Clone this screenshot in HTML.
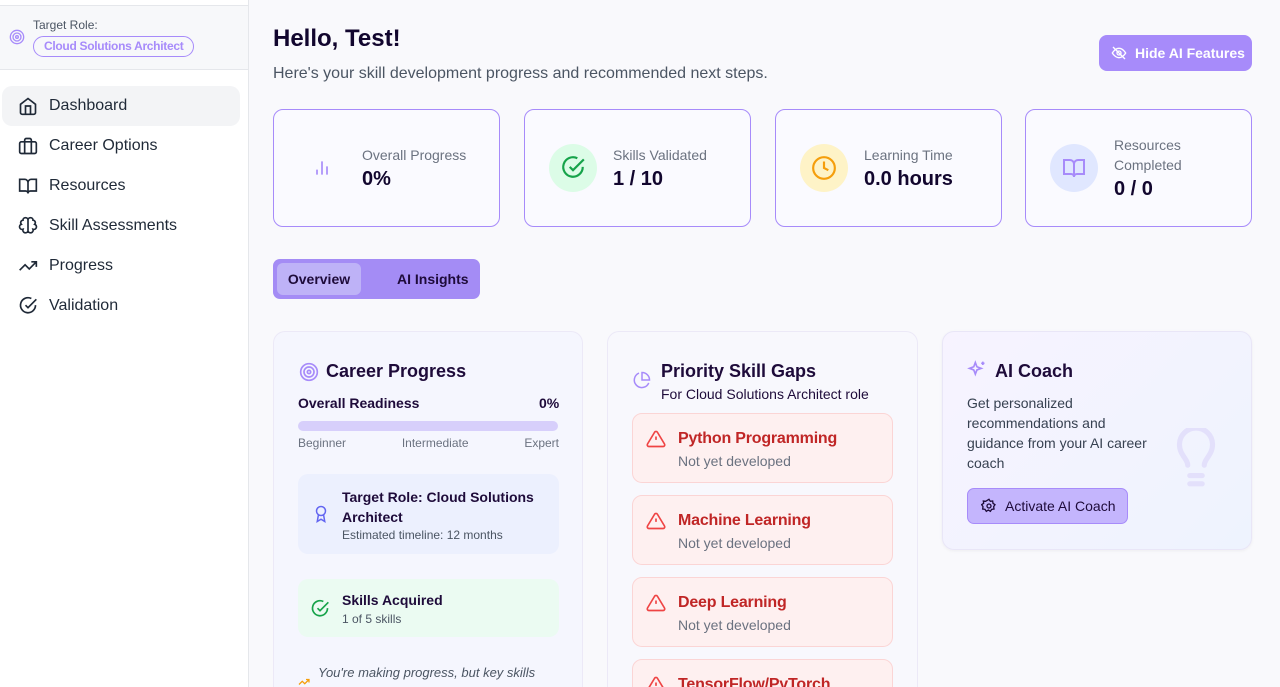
<!DOCTYPE html>
<html style="overflow:hidden;height:687px"><head><meta charset="utf-8"><style>
*{box-sizing:border-box;margin:0;padding:0}
body{width:1280px;height:687px;overflow:hidden;background:#f9f9fc;font-family:"Liberation Sans",sans-serif;color:#1e0b3a;position:relative}
.abs{position:absolute}
.side{left:0;top:0;width:249px;height:687px;background:#fff;border-right:1px solid #e5e7eb}
.sh{left:0;top:5px;width:248px;height:65px;background:#f7f8fa;border-top:1px solid #e5e7eb;border-bottom:1px solid #e5e7eb}
.nav{left:2px;width:238px;height:40px;border-radius:10px;display:flex;align-items:center;padding-left:16px;font-size:16px;color:#1f2937}
.nav svg{margin-right:11px}
.card{background:#fafaff;border:1px solid #a78bfa;border-radius:10px;height:118px;width:227px;top:109px;display:flex;align-items:center}
.ic{width:48px;height:48px;border-radius:50%;margin-left:24px;margin-right:16px;display:flex;align-items:center;justify-content:center;flex:none}
.lbl{font-size:14px;color:#6b7280;line-height:20px}
.val{font-size:20px;font-weight:bold;color:#12062e;margin-top:3px}
.big{top:331px;height:356px;border:1px solid #ece9f7;border-bottom:none;border-radius:12px 12px 0 0;background:#f5f6fe;overflow:hidden}
.gap{left:24px;width:261px;height:70px;background:#fef0f0;border:1px solid #fbd5d5;border-radius:10px}
.gap b{position:absolute;left:45px;top:16px;font-size:16px;color:#c02626;font-weight:bold;letter-spacing:-0.2px}
.gap span{position:absolute;left:45px;top:39px;font-size:14px;color:#6b7280}
.gap svg{position:absolute;left:13px;top:15px}
</style></head><body>
<div class="abs side"></div>
<div class="abs sh">
 <svg class="abs" style="left:9px;top:23px" width="16" height="16" viewBox="0 0 24 24" fill="none" stroke="#a78bfa" stroke-width="2"><circle cx="12" cy="12" r="10"/><circle cx="12" cy="12" r="6"/><circle cx="12" cy="12" r="2"/></svg>
 <div class="abs" style="left:33px;top:12px;font-size:12px;color:#4b5563">Target Role:</div>
 <div class="abs" style="left:33px;top:30px;height:21px;padding:0 10px;border:1px solid #a78bfa;border-radius:11px;font-size:12px;font-weight:bold;color:#a78bfa;line-height:19px;letter-spacing:-0.3px">Cloud Solutions Architect</div>
</div>
<div class="abs nav" style="top:86px;background:#f3f4f6"><svg width="20" height="20" viewBox="0 0 24 24" fill="none" stroke="#1f2937" stroke-width="2"><path d="M3 10l9-7 9 7v10a2 2 0 0 1-2 2H5a2 2 0 0 1-2-2z"/><path d="M9 22V12h6v10"/></svg>Dashboard</div>
<div class="abs nav" style="top:126px"><svg width="20" height="20" viewBox="0 0 24 24" fill="none" stroke="#1f2937" stroke-width="2"><rect x="2" y="7" width="20" height="14" rx="2"/><path d="M16 21V5a2 2 0 0 0-2-2h-4a2 2 0 0 0-2 2v16"/></svg>Career Options</div>
<div class="abs nav" style="top:166px"><svg width="20" height="20" viewBox="0 0 24 24" fill="none" stroke="#1f2937" stroke-width="2"><path d="M2 4h6a4 4 0 0 1 4 4v13a3 3 0 0 0-3-3H2zM22 4h-6a4 4 0 0 0-4 4v13a3 3 0 0 1 3-3h7z"/></svg>Resources</div>
<div class="abs nav" style="top:206px"><svg width="20" height="20" viewBox="0 0 24 24" fill="none" stroke="#1f2937" stroke-width="2"><path d="M12 5a3 3 0 0 0-6 0 3 3 0 0 0-2 5 3 3 0 0 0 2 6 3 3 0 0 0 6 2 3 3 0 0 0 6-2 3 3 0 0 0 2-6 3 3 0 0 0-2-5 3 3 0 0 0-6 0v13"/></svg>Skill Assessments</div>
<div class="abs nav" style="top:246px"><svg width="20" height="20" viewBox="0 0 24 24" fill="none" stroke="#1f2937" stroke-width="2"><path d="M22 7l-8.5 8.5-5-5L2 17M16 7h6v6"/></svg>Progress</div>
<div class="abs nav" style="top:286px"><svg width="20" height="20" viewBox="0 0 24 24" fill="none" stroke="#1f2937" stroke-width="2"><path d="M21 11a9 9 0 1 1-5-8"/><path d="M9 11l3 3L22 4"/></svg>Validation</div>

<div class="abs" style="left:273px;top:25px;font-size:24px;font-weight:bold;color:#12062e">Hello, Test!</div>
<div class="abs" style="left:273px;top:65px;font-size:16px;color:#4b5563">Here's your skill development progress and recommended next steps.</div>
<div class="abs" style="left:1099px;top:35px;width:153px;height:36px;background:#a78bfa;border-radius:8px;color:#fff;font-size:14px;font-weight:bold;display:flex;align-items:center;padding-left:12px"><svg width="16" height="16" viewBox="0 0 24 24" fill="none" stroke="#fff" stroke-width="2" style="margin-right:8px"><path d="M2 12s4-7 10-7 10 7 10 7-4 7-10 7S2 12 2 12z"/><circle cx="12" cy="12" r="3"/><path d="M3 3l18 18"/></svg>Hide AI Features</div>

<div class="abs card" style="left:273px"><div class="ic"><svg width="20" height="20" viewBox="0 0 24 24" fill="none" stroke="#a78bfa" stroke-width="2"><path d="M6 20v-6M12 20V4M18 20v-10"/></svg></div><div><div class="lbl">Overall Progress</div><div class="val">0%</div></div></div>
<div class="abs card" style="left:524px"><div class="ic" style="background:#dcfce7"><svg width="26" height="26" viewBox="0 0 24 24" fill="none" stroke="#16a34a" stroke-width="2"><path d="M21 11a9 9 0 1 1-5-8"/><path d="M9 11l3 3L22 4"/></svg></div><div><div class="lbl">Skills Validated</div><div class="val">1 / 10</div></div></div>
<div class="abs card" style="left:775px"><div class="ic" style="background:#fef3c7"><svg width="26" height="26" viewBox="0 0 24 24" fill="none" stroke="#f59e0b" stroke-width="2"><circle cx="12" cy="12" r="10"/><path d="M12 6v6l4 2"/></svg></div><div><div class="lbl">Learning Time</div><div class="val">0.0 hours</div></div></div>
<div class="abs card" style="left:1025px"><div class="ic" style="background:#e0e7ff"><svg width="24" height="24" viewBox="0 0 24 24" fill="none" stroke="#a78bfa" stroke-width="2"><path d="M2 4h6a4 4 0 0 1 4 4v13a3 3 0 0 0-3-3H2zM22 4h-6a4 4 0 0 0-4 4v13a3 3 0 0 1 3-3h7z"/></svg></div><div><div class="lbl">Resources<br>Completed</div><div class="val">0 / 0</div></div></div>

<div class="abs" style="left:273px;top:259px;width:207px;height:40px;background:#a48cf5;border-radius:7px"></div>
<div class="abs" style="left:277px;top:263px;width:84px;height:32px;background:#beb2f7;border-radius:6px;font-size:14px;font-weight:bold;color:#1e0b3a;text-align:center;line-height:32px">Overview</div>
<div class="abs" style="left:397px;top:271px;font-size:14px;font-weight:bold;color:#1e0b3a">AI Insights</div>

<div class="abs big" style="left:273px;width:310px">
 <svg class="abs" style="left:25px;top:30px" width="20" height="20" viewBox="0 0 24 24" fill="none" stroke="#a78bfa" stroke-width="2"><circle cx="12" cy="12" r="10"/><circle cx="12" cy="12" r="6"/><circle cx="12" cy="12" r="2"/></svg>
 <div class="abs" style="left:52px;top:29px;font-size:18px;font-weight:bold">Career Progress</div>
 <div class="abs" style="left:24px;top:63px;font-size:14px;font-weight:bold">Overall Readiness</div>
 <div class="abs" style="left:265px;top:63px;font-size:14px;font-weight:bold">0%</div>
 <div class="abs" style="left:24px;top:89px;width:260px;height:10px;border-radius:5px;background:#d7cffb"></div>
 <div class="abs" style="left:24px;top:104px;width:261px;font-size:12px;color:#6b7280;display:flex;justify-content:space-between"><span>Beginner</span><span>Intermediate</span><span>Expert</span></div>
 <div class="abs" style="left:24px;top:142px;width:261px;height:80px;background:#ecf0fe;border-radius:10px">
  <svg class="abs" style="left:14px;top:29px" width="18" height="22" viewBox="0 0 24 24" fill="none" stroke="#6366f1" stroke-width="2"><circle cx="12" cy="8" r="6"/><path d="M15.5 13.5L17 22l-5-3-5 3 1.5-8.5"/></svg>
  <div class="abs" style="left:44px;top:13px;font-size:14px;font-weight:bold;line-height:20px">Target Role: Cloud Solutions<br>Architect</div>
  <div class="abs" style="left:44px;top:54px;font-size:12px;color:#4b5563">Estimated timeline: 12 months</div>
 </div>
 <div class="abs" style="left:24px;top:247px;width:261px;height:58px;background:#ebfbf2;border-radius:10px">
  <svg class="abs" style="left:12px;top:20px" width="20" height="20" viewBox="0 0 24 24" fill="none" stroke="#16a34a" stroke-width="2"><path d="M21 11a9 9 0 1 1-5-8"/><path d="M9 11l3 3L22 4"/></svg>
  <div class="abs" style="left:44px;top:13px;font-size:14px;font-weight:bold">Skills Acquired</div>
  <div class="abs" style="left:44px;top:33px;font-size:12px;color:#4b5563">1 of 5 skills</div>
 </div>
 <svg class="abs" style="left:24px;top:344px" width="12" height="12" viewBox="0 0 24 24" fill="none" stroke="#f59e0b" stroke-width="2.5"><path d="M22 7l-8.5 8.5-5-5L2 17M16 7h6v6"/></svg>
 <div class="abs" style="left:44px;top:333px;font-size:13px;font-style:italic;color:#4b5563;white-space:nowrap">You're making progress, but key skills</div>
</div>

<div class="abs big" style="left:607px;width:311px;background:#f8f8fd">
 <svg class="abs" style="left:25px;top:39px" width="18" height="18" viewBox="0 0 24 24" fill="none" stroke="#a78bfa" stroke-width="2"><path d="M21 15.9A10 10 0 1 1 8 2.8"/><path d="M22 12A10 10 0 0 0 12 2v10z"/></svg>
 <div class="abs" style="left:53px;top:29px;font-size:18px;font-weight:bold">Priority Skill Gaps</div>
 <div class="abs" style="left:53px;top:54px;font-size:14px">For Cloud Solutions Architect role</div>
 <div class="abs gap" style="top:81px"><svg width="20" height="20" viewBox="0 0 24 24" fill="none" stroke="#ef4444" stroke-width="2"><path d="M10.3 3.9L1.8 18a2 2 0 0 0 1.7 3h17a2 2 0 0 0 1.7-3L13.7 3.9a2 2 0 0 0-3.4 0zM12 9v4M12 17h.01"/></svg><b>Python Programming</b><span>Not yet developed</span></div>
 <div class="abs gap" style="top:163px"><svg width="20" height="20" viewBox="0 0 24 24" fill="none" stroke="#ef4444" stroke-width="2"><path d="M10.3 3.9L1.8 18a2 2 0 0 0 1.7 3h17a2 2 0 0 0 1.7-3L13.7 3.9a2 2 0 0 0-3.4 0zM12 9v4M12 17h.01"/></svg><b>Machine Learning</b><span>Not yet developed</span></div>
 <div class="abs gap" style="top:245px"><svg width="20" height="20" viewBox="0 0 24 24" fill="none" stroke="#ef4444" stroke-width="2"><path d="M10.3 3.9L1.8 18a2 2 0 0 0 1.7 3h17a2 2 0 0 0 1.7-3L13.7 3.9a2 2 0 0 0-3.4 0zM12 9v4M12 17h.01"/></svg><b>Deep Learning</b><span>Not yet developed</span></div>
 <div class="abs gap" style="top:327px"><svg width="20" height="20" viewBox="0 0 24 24" fill="none" stroke="#ef4444" stroke-width="2"><path d="M10.3 3.9L1.8 18a2 2 0 0 0 1.7 3h17a2 2 0 0 0 1.7-3L13.7 3.9a2 2 0 0 0-3.4 0zM12 9v4M12 17h.01"/></svg><b>TensorFlow/PyTorch</b><span>Not yet developed</span></div>
</div>

<div class="abs" style="left:942px;top:331px;width:310px;height:219px;border:1px solid #e9e6f7;border-radius:12px;background:linear-gradient(135deg,#f7f3ff,#eef3fe);box-shadow:0 1px 3px rgba(0,0,0,.05)">
 <svg class="abs" style="left:24px;top:28px" width="20" height="20" viewBox="0 0 24 24" fill="none" stroke="#a78bfa" stroke-width="2"><path d="M10 3l1.9 5.1L17 10l-5.1 1.9L10 17l-1.9-5.1L3 10l5.1-1.9z"/><path d="M19 2v4M17 4h4"/></svg>
 <div class="abs" style="left:52px;top:29px;font-size:18px;font-weight:bold">AI Coach</div>
 <div class="abs" style="left:24px;top:61px;font-size:14px;line-height:20px;color:#374151">Get personalized<br>recommendations and<br>guidance from your AI career<br>coach</div>
 <svg class="abs" style="left:228px;top:96px" width="50" height="62" viewBox="0 0 24 30" fill="none" stroke="#e3e0fb" stroke-width="2.5" stroke-linecap="round"><path d="M8 18c0-3-4-5-4-10a8 8 0 0 1 16 0c0 5-4 7-4 10"/><path d="M9 23h6M9 27h6"/></svg>
 <div class="abs" style="left:24px;top:156px;width:161px;height:36px;background:#c4b5fd;border:1px solid #a78bfa;border-radius:7px;font-size:14px;color:#1e0b3a;display:flex;align-items:center;padding-left:13px"><svg width="16" height="16" viewBox="0 0 24 24" fill="none" stroke="#1e0b3a" stroke-width="2" style="margin-right:8px"><circle cx="12" cy="12" r="3"/><path d="M12 2l2 3 3.5-.5.5 3.5 3 2-2 3 .5 3.5-3.5.5-2 3-3-2-3 2-2-3-3.5-.5.5-3.5-2-3 3-2-.5-3.5 3.5.5z"/></svg>Activate AI Coach</div>
</div>
</body></html>
